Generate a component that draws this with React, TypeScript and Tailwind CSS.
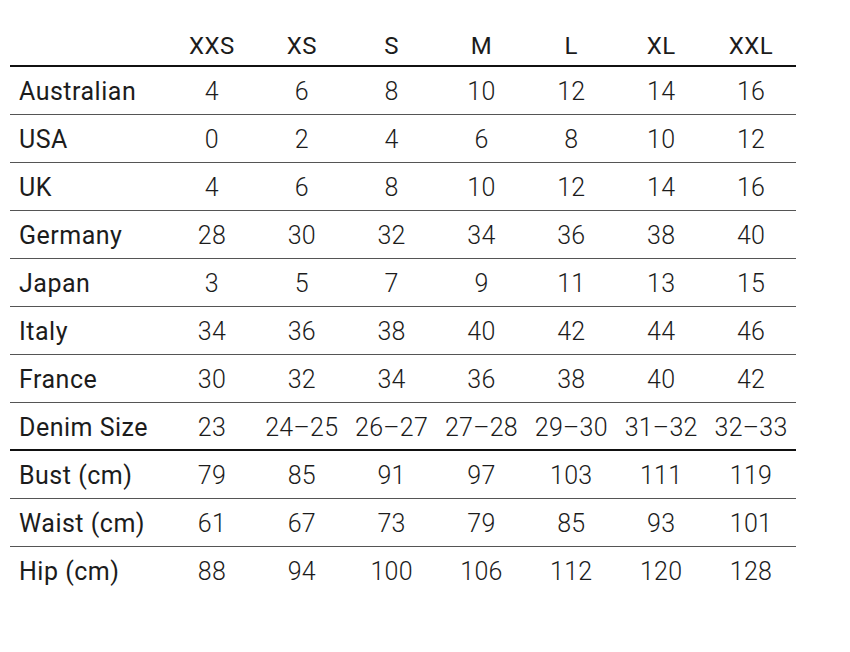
import React from 'react';

const sizes = ['XXS', 'XS', 'S', 'M', 'L', 'XL', 'XXL'];

const rows: { label: string; values: string[]; thick?: boolean }[] = [
  { label: 'Australian', values: ['4', '6', '8', '10', '12', '14', '16'] },
  { label: 'USA', values: ['0', '2', '4', '6', '8', '10', '12'] },
  { label: 'UK', values: ['4', '6', '8', '10', '12', '14', '16'] },
  { label: 'Germany', values: ['28', '30', '32', '34', '36', '38', '40'] },
  { label: 'Japan', values: ['3', '5', '7', '9', '11', '13', '15'] },
  { label: 'Italy', values: ['34', '36', '38', '40', '42', '44', '46'] },
  { label: 'France', values: ['30', '32', '34', '36', '38', '40', '42'] },
  { label: 'Denim Size', values: ['23', '24–25', '26–27', '27–28', '29–30', '31–32', '32–33'], thick: true },
  { label: 'Bust (cm)', values: ['79', '85', '91', '97', '103', '111', '119'] },
  { label: 'Waist (cm)', values: ['61', '67', '73', '79', '85', '93', '101'] },
  { label: 'Hip (cm)', values: ['88', '94', '100', '106', '112', '120', '128'] },
];

export default function App() {
  return (
    <div className="w-[850px] h-[652px] bg-white pt-5 pl-[10px] font-['Roboto','Liberation_Sans',sans-serif] text-[#1c1c1c]">
      <table className="w-[786px] table-fixed border-collapse">
        <colgroup>
          <col className="w-[157px]" />
          {sizes.map((s) => (
            <col key={s} />
          ))}
        </colgroup>
        <thead>
          <tr className="h-[46px] border-b-2 border-[#111]">
            <th />
            {sizes.map((s) => (
              <th key={s} className="text-center align-middle text-[24px] font-normal tracking-[0.02em] pt-[6px]">
                {s}
              </th>
            ))}
          </tr>
        </thead>
        <tbody>
          {rows.map((r, i) => (
            <tr
              key={r.label}
              className={`h-[48px] ${
                i === rows.length - 1 ? '' : r.thick ? 'border-b-2 border-[#111]' : 'border-b border-[#555]'
              }`}
            >
              <td className="pl-[9px] pt-[3px] text-left text-[25px] font-normal tracking-[0.02em] whitespace-nowrap">{r.label}</td>
              {r.values.map((v, j) => (
                <td key={j} className="pt-[3px] text-center text-[25px] font-light tracking-[0.01em] whitespace-nowrap">
                  {v}
                </td>
              ))}
            </tr>
          ))}
        </tbody>
      </table>
    </div>
  );
}
